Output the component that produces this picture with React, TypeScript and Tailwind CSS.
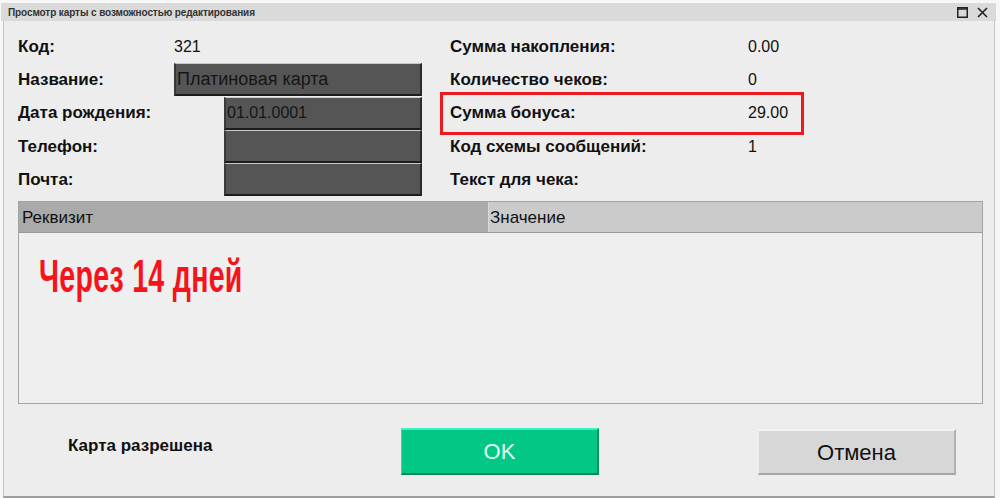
const font = { fontFamily: '"Liberation Sans", Arial, sans-serif' }

function Field({ value, indent, big }: { value?: string; indent?: boolean; big?: boolean }) {
  return (
    <div className={`${indent ? 'ml-[50px]' : ''} ${big ? 'text-[18px]' : 'text-[16px]'} flex-1 h-[33px] bg-[#555555] border-t border-t-[#c9c9c9] border-l-2 border-l-[#3a3a3a] border-r-2 border-r-[#2a2a2a] border-b-2 border-b-[#1c1c1c] flex items-center pl-[1px] text-[#151515]`}>
      {value}
    </div>
  )
}

function LeftRow({ label, children }: { label: string; children: React.ReactNode }) {
  return (
    <div className="flex items-center h-[33.3px]">
      <div className="w-[156px] shrink-0 text-[17px] font-bold text-[#111]">{label}</div>
      {children}
    </div>
  )
}

function RightRow({ label, value }: { label: string; value?: string }) {
  return (
    <div className="flex items-center h-[33.3px]">
      <div className="w-[298px] shrink-0 text-[17px] font-bold text-[#111]">{label}</div>
      <div className="text-[16px] text-[#111]">{value}</div>
    </div>
  )
}

export default function App() {
  return (
    <div style={font} className="w-[1000px] h-[498px] bg-[#f7f7f7] pt-[3px] flex flex-col overflow-hidden">
      {/* Title bar */}
      <div className="h-[18px] bg-[#dadada] flex items-center justify-between pl-[7px] pr-[8px] mr-[4px] ml-[1px]">
        <span className="text-[10px] font-bold text-[#333] tracking-[-0.1px]">Просмотр карты с возможностью редактирования</span>
        <div className="flex items-center gap-[9px] text-[#222]">
          <svg width="11" height="11" viewBox="0 0 11 11">
            <rect x="0.75" y="0.75" width="9.5" height="9.5" fill="none" stroke="currentColor" strokeWidth="1.5" />
            <line x1="0.75" y1="2" x2="10.25" y2="2" stroke="currentColor" strokeWidth="1.5" />
          </svg>
          <svg width="11" height="11" viewBox="0 0 11 11">
            <path d="M1 1 L10 10 M10 1 L1 10" stroke="currentColor" strokeWidth="1.6" />
          </svg>
        </div>
      </div>

      {/* Body */}
      <div className="flex-1 bg-[#ededed] ml-[3px] mr-[5px] border-l border-r border-b-2 border-[#c4c4c4] border-b-[#9e9e9e] flex flex-col pl-[14px] pr-[11px] pt-[9px]">
        <div className="flex">
          <div className="w-[404px] flex flex-col">
            <LeftRow label="Код:">
              <div className="text-[16px] text-[#111]">321</div>
            </LeftRow>
            <LeftRow label="Название:">
              <Field value="Платиновая карта" big />
            </LeftRow>
            <LeftRow label="Дата рождения:">
              <Field value="01.01.0001" indent />
            </LeftRow>
            <LeftRow label="Телефон:">
              <Field indent />
            </LeftRow>
            <LeftRow label="Почта:">
              <Field indent />
            </LeftRow>
          </div>
          <div className="ml-[28px] flex flex-col">
            <RightRow label="Сумма накопления:" value="0.00" />
            <RightRow label="Количество чеков:" value="0" />
            <div className="relative">
              <RightRow label="Сумма бонуса:" value="29.00" />
              <div className="absolute left-[-10px] top-[-5px] w-[364px] h-[43px] border-[3px] border-[#ec1a1f]" />
            </div>
            <RightRow label="Код схемы сообщений:" value="1" />
            <RightRow label="Текст для чека:" />
          </div>
        </div>

        {/* Table */}
        <div className="mt-[5px] h-[203px] border border-[#a3a3a3] bg-[#efefef] flex flex-col">
          <div className="h-[31px] flex border-b border-[#9a9a9a] text-[17px] text-[#111]">
            <div className="w-[470px] bg-[#aaaaaa] border-r border-[#d8d8d8] flex items-center pl-[3px]">Реквизит</div>
            <div className="flex-1 bg-[#cbcbcb] flex items-center pl-[1px]">Значение</div>
          </div>
          <div className="pl-[20px] pt-[20px]">
            <span className="inline-block origin-left scale-x-[0.62] text-[#f5141c] font-bold text-[46px] leading-none tracking-[0.5px]">
              Через 14 дней
            </span>
          </div>
        </div>

        {/* Footer */}
        <div className="flex items-start pt-[24px]">
          <div className="w-[383px] pl-[50px] pt-[5px] text-[17px] font-bold text-[#111]">Карта разрешена</div>
          <button className="w-[198px] h-[47px] bg-[#03c784] border-t-2 border-t-[#3cf0c0] border-l border-l-[#2be0a8] border-b-2 border-b-[#058a55] border-r-2 border-r-[#06905c] text-[22px] text-[#e6fff4]">
            OK
          </button>
          <button className="ml-[159px] mt-[1px] w-[198px] h-[46px] bg-[#d7d7d7] border-t-2 border-t-[#f4f4f4] border-l border-l-[#f0f0f0] border-b-2 border-b-[#a5a5a5] border-r-2 border-r-[#b0b0b0] text-[22px] text-[#111]">
            Отмена
          </button>
        </div>
      </div>
    </div>
  )
}
